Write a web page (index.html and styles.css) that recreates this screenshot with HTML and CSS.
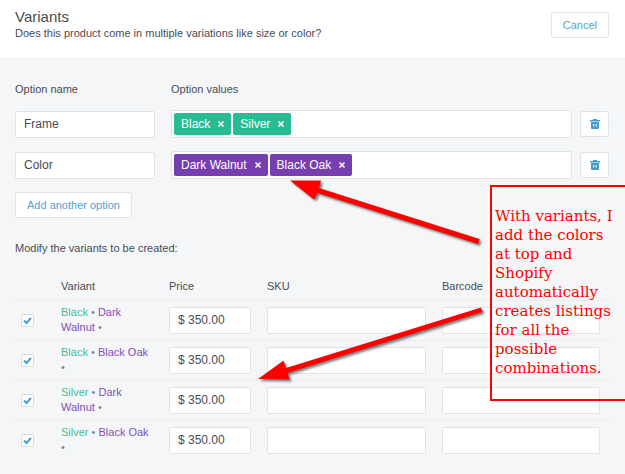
FILE: index.html
```html
<!DOCTYPE html>
<html lang="en">
<head>
<meta charset="utf-8">
<title>Variants</title>
<link rel="stylesheet" href="styles.css">
</head>
<body>
<svg class="sprite" aria-hidden="true">
  <symbol id="trash" viewBox="0 0 10 10">
    <path d="M0 1h3V0h4v1h3v1.500H0z"/>
    <path fill-rule="evenodd" d="M1 3h8v6q0 1-1 1H2q-1 0-1-1zM3.300 5v2.500h1V5zM5.700 5v2.500h1V5z"/>
  </symbol>
  <symbol id="cross" viewBox="0 0 8 8">
    <path d="M1.500 1.500l5 5M6.500 1.500l-5 5" fill="none" stroke="#fff" stroke-width="1.500"/>
  </symbol>
  <symbol id="tick" viewBox="0 0 9 9">
    <path d="M1 4.500L3.500 7L8 2" fill="none" stroke="#479ccf" stroke-width="2"/>
  </symbol>
</svg>
<header class="header">
  <div>
    <h1 class="title">Variants</h1>
    <p class="subtitle">Does this product come in multiple variations like size or color?</p>
  </div>
  <button class="button" type="button">Cancel</button>
</header>
<main class="content">
  <section class="options">
    <div class="option labels">
      <span id="name-label">Option name</span>
      <span id="values-label">Option values</span>
    </div>
    <div class="option">
      <input class="field" type="text" value="Frame" aria-labelledby="name-label">
      <div class="tags" role="group" aria-labelledby="values-label">
        <span class="tag green">Black <button class="remove" type="button" aria-label="Remove Black"><svg><use href="#cross"/></svg></button></span>
        <span class="tag green">Silver <button class="remove" type="button" aria-label="Remove Silver"><svg><use href="#cross"/></svg></button></span>
      </div>
      <button class="button icon" type="button" aria-label="Delete Frame"><svg><use href="#trash"/></svg></button>
    </div>
    <div class="option">
      <input class="field" type="text" value="Color" aria-labelledby="name-label">
      <div class="tags" role="group" aria-labelledby="values-label">
        <span class="tag purple">Dark Walnut <button class="remove" type="button" aria-label="Remove Dark Walnut"><svg><use href="#cross"/></svg></button></span>
        <span class="tag purple">Black Oak <button class="remove" type="button" aria-label="Remove Black Oak"><svg><use href="#cross"/></svg></button></span>
      </div>
      <button class="button icon" type="button" aria-label="Delete Color"><svg><use href="#trash"/></svg></button>
    </div>
  </section>
  <button class="button" type="button">Add another option</button>
  <p class="hint">Modify the variants to be created:</p>
  <table class="variants">
    <colgroup><col class="col-check"><col class="col-variant"><col class="col-price"><col><col></colgroup>
    <thead>
      <tr><th></th><th>Variant</th><th>Price</th><th>SKU</th><th>Barcode</th></tr>
    </thead>
    <tbody>
      <tr>
        <td><label class="check"><input type="checkbox" checked aria-label="Black, Dark Walnut"><svg><use href="#tick"/></svg></label></td>
        <td class="name"><span class="g">Black</span> • <span class="p">Dark Walnut</span> •</td>
        <td><input class="field" type="text" value="$ 350.00" aria-label="Price"></td>
        <td><input class="field" type="text" aria-label="SKU"></td>
        <td><input class="field" type="text" aria-label="Barcode"></td>
      </tr>
      <tr>
        <td><label class="check"><input type="checkbox" checked aria-label="Black, Black Oak"><svg><use href="#tick"/></svg></label></td>
        <td class="name"><span class="g">Black</span> • <span class="p">Black Oak</span> •</td>
        <td><input class="field" type="text" value="$ 350.00" aria-label="Price"></td>
        <td><input class="field" type="text" aria-label="SKU"></td>
        <td><input class="field" type="text" aria-label="Barcode"></td>
      </tr>
      <tr>
        <td><label class="check"><input type="checkbox" checked aria-label="Silver, Dark Walnut"><svg><use href="#tick"/></svg></label></td>
        <td class="name"><span class="g">Silver</span> • <span class="p">Dark Walnut</span> •</td>
        <td><input class="field" type="text" value="$ 350.00" aria-label="Price"></td>
        <td><input class="field" type="text" aria-label="SKU"></td>
        <td><input class="field" type="text" aria-label="Barcode"></td>
      </tr>
      <tr>
        <td><label class="check"><input type="checkbox" checked aria-label="Silver, Black Oak"><svg><use href="#tick"/></svg></label></td>
        <td class="name"><span class="g">Silver</span> • <span class="p">Black Oak</span> •</td>
        <td><input class="field" type="text" value="$ 350.00" aria-label="Price"></td>
        <td><input class="field" type="text" aria-label="SKU"></td>
        <td><input class="field" type="text" aria-label="Barcode"></td>
      </tr>
    </tbody>
  </table>
</main>
<svg class="arrows" viewBox="0 0 240 220" aria-hidden="true">
  <path d="M40 10.500L71 10.500L69 18L229.500 69L228 74L67.500 23L64 29.500z"/>
  <path d="M8 209L33.500 190.500L36 198L231 137.500L232.500 142L37.500 203L39.500 209.500z"/>
</svg>
<aside class="note">With variants, I add the colors at top and Shopify automatically creates listings for all the possible combinations.</aside>
</body>
</html>
```
FILE: styles.css
```css
* { box-sizing: border-box; }
body {
  margin: 0;
  position: relative;
  min-height: 100vh;
  overflow-x: hidden;
  background: #f4f6f8;
  color: #484c55;
  font: 11px/15px "Liberation Sans", Arial, sans-serif;
}
h1, p { margin: 0; }
input, button { font: inherit; color: inherit; }
.sprite { display: none; }
.header {
  display: flex;
  justify-content: space-between;
  align-items: flex-start;
  height: 59px;
  padding: 7px 16px 0 15px;
  background: #fff;
  border-bottom: 1px solid #ebeef0;
}
.title { font-size: 15px; line-height: 19px; font-weight: 400; }
.button {
  height: 26px;
  padding: 0 11px;
  background: #fff;
  border: 1px solid #dfe4e8;
  border-radius: 2px;
  color: #58a0d0;
}
.header .button { margin-top: 5px; }
.content { padding: 23px 16px 12px 15px; }
.options { display: grid; gap: 13px; margin-bottom: 13px; }
.option {
  display: grid;
  grid-template-columns: 148px 1fr 29px;
  column-gap: 8px;
  align-items: center;
}
.option .field { width: 140px; }
.field {
  display: block;
  width: 100%;
  height: 27px;
  padding: 0 8px;
  background: #fff;
  border: 1px solid #dfe4e8;
  border-radius: 2px;
  font-size: 12px;
}
.tags {
  display: flex;
  gap: 2px;
  height: 28px;
  padding: 2px;
  background: #fff;
  border: 1px solid #dfe4e8;
  border-radius: 2px;
}
.tag {
  display: flex;
  align-items: center;
  gap: 7px;
  padding: 0 6px 0 7px;
  border-radius: 2px;
  color: #fff;
  font-size: 12px;
}
.green { background: #29bc94; }
.purple { background: #763eaf; }
.remove { padding: 0; border: 0; background: none; }
.remove svg { display: block; width: 8px; height: 8px; }
.icon { padding: 0; display: grid; place-items: center; }
.icon svg { width: 10px; height: 10px; fill: #479ccf; }
.hint { margin: 23px 0 18px; }
.variants { width: 100%; table-layout: fixed; border-collapse: collapse; }
.col-check { width: 46px; }
.col-variant { width: 108px; }
.col-price { width: 98px; }
th { height: 26px; padding: 0; text-align: left; font-weight: 400; }
td { height: 40px; padding: 0 16px 0 0; border-top: 1px solid #ebeef0; }
td:last-child { padding-right: 9px; }
td:nth-child(4), th:nth-child(4) { width: 175px; }
td.name { padding: 4px 16px 4px 0; vertical-align: top; color: #798c9c; }
.g { color: #45bd98; }
.p { color: #8350b5; }
.check {
  display: grid;
  place-items: center;
  width: 13px;
  height: 13px;
  margin-left: 6px;
  background: #fff;
  border: 1px solid #d5dde3;
  border-radius: 2px;
}
.check input, .check svg { grid-area: 1 / 1; width: 9px; height: 9px; margin: 0; }
.check input { appearance: none; }
.check svg { visibility: hidden; pointer-events: none; }
.check input:checked + svg { visibility: visible; }
.arrows {
  position: absolute;
  left: 250px;
  top: 170px;
  width: 240px;
  height: 220px;
  fill: #f00;
  filter: drop-shadow(2px 2px 1px rgba(0, 0, 0, .5));
}
.note {
  position: absolute;
  left: 490px;
  top: 185px;
  width: 137px;
  height: 216px;
  padding: 20px 3px;
  border: 2px solid #f00;
  color: #f00;
  font: 15px/19px "DejaVu Serif", serif;
}
```
